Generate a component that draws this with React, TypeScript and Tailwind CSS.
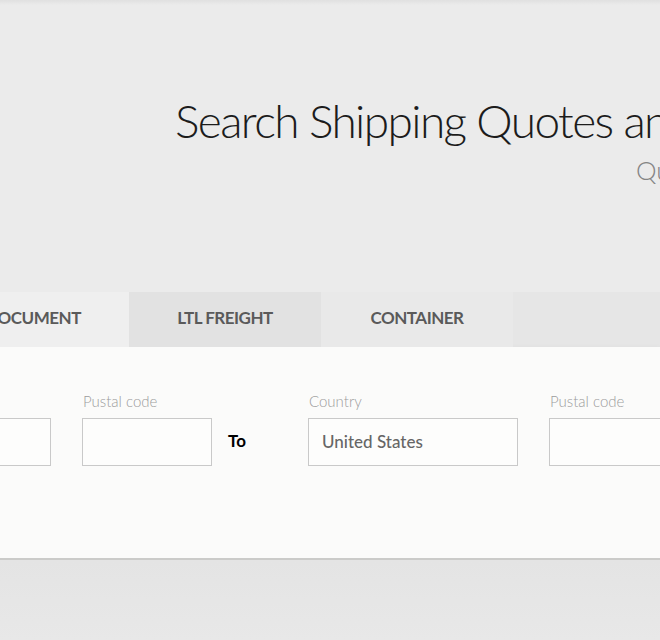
import React from 'react';

const tabs = ['DOCUMENT', 'LTL FREIGHT', 'CONTAINER'];
const tabBg = ['bg-[#efefef]', 'bg-[#e2e2e2]', 'bg-[#e9e9e9]'];

const Field: React.FC<{ label: string; width: string; value?: string }> = ({ label, width, value }) => (
  <div className={`flex flex-col shrink-0 ${width}`}>
    <span className="text-[15px] font-light text-[#9c9c9c] leading-5 pl-px">{label}</span>
    <div className="mt-[7px] h-[48px] border border-[#c9c9c9] bg-[#fdfdfc] flex items-center px-[13px]">
      {value && <span className="text-[17px] font-medium text-[#666666]">{value}</span>}
    </div>
  </div>
);

const App: React.FC = () => {
  return (
    <div className="w-[660px] h-[640px] overflow-hidden bg-[#ebebeb] font-['Lato',sans-serif]">
      <div className="h-[5px] bg-gradient-to-b from-[#e0e0e0] to-[#ebebeb]" />

      {/* Heading */}
      <div className="pt-[88px] pl-[175px] whitespace-nowrap">
        <h1 className="text-[46px] font-light leading-[56px] text-[#1c1c1c] tracking-[-1.6px]">
          Search Shipping Quotes and Rates
        </h1>
        <p className="mt-[5px] pl-[461px] text-[26px] font-light leading-8 text-[#858585]">Quick and easy</p>
      </div>

      {/* Shipment type tabs */}
      <div className="mt-[106px] ml-[-63px] flex h-[55px] bg-[#e6e6e6]">
        {tabs.map((t, i) => (
          <div key={t} className={`w-[192px] shrink-0 flex items-center justify-center pb-[3px] ${tabBg[i]}`}>
            <span className="text-[17px] font-bold text-[#5a5a5a] tracking-[-0.5px]">{t}</span>
          </div>
        ))}
      </div>

      {/* Route form */}
      <div className="h-[213px] bg-[#fbfbfa] border-b-2 border-[#cbcbc9] shadow-[0_3px_7px_rgba(0,0,0,0.09)]">
        <div className="pt-[44px] ml-[-159px] flex items-end whitespace-nowrap">
          <Field label="Country" width="w-[210px]" />
          <div className="w-[31px] shrink-0" />
          <Field label="Pustal code" width="w-[130px]" />
          <div className="w-[96px] shrink-0 h-[48px] flex items-center pl-[16px] pb-[3px]">
            <span className="text-[17px] font-bold text-black">To</span>
          </div>
          <Field label="Country" width="w-[210px]" value="United States" />
          <div className="w-[31px] shrink-0" />
          <Field label="Pustal code" width="w-[130px]" />
        </div>
      </div>

      <div className="h-[80px] bg-gradient-to-b from-[#e4e4e4] to-[#e8e8e8]" />
    </div>
  );
};

export default App;
